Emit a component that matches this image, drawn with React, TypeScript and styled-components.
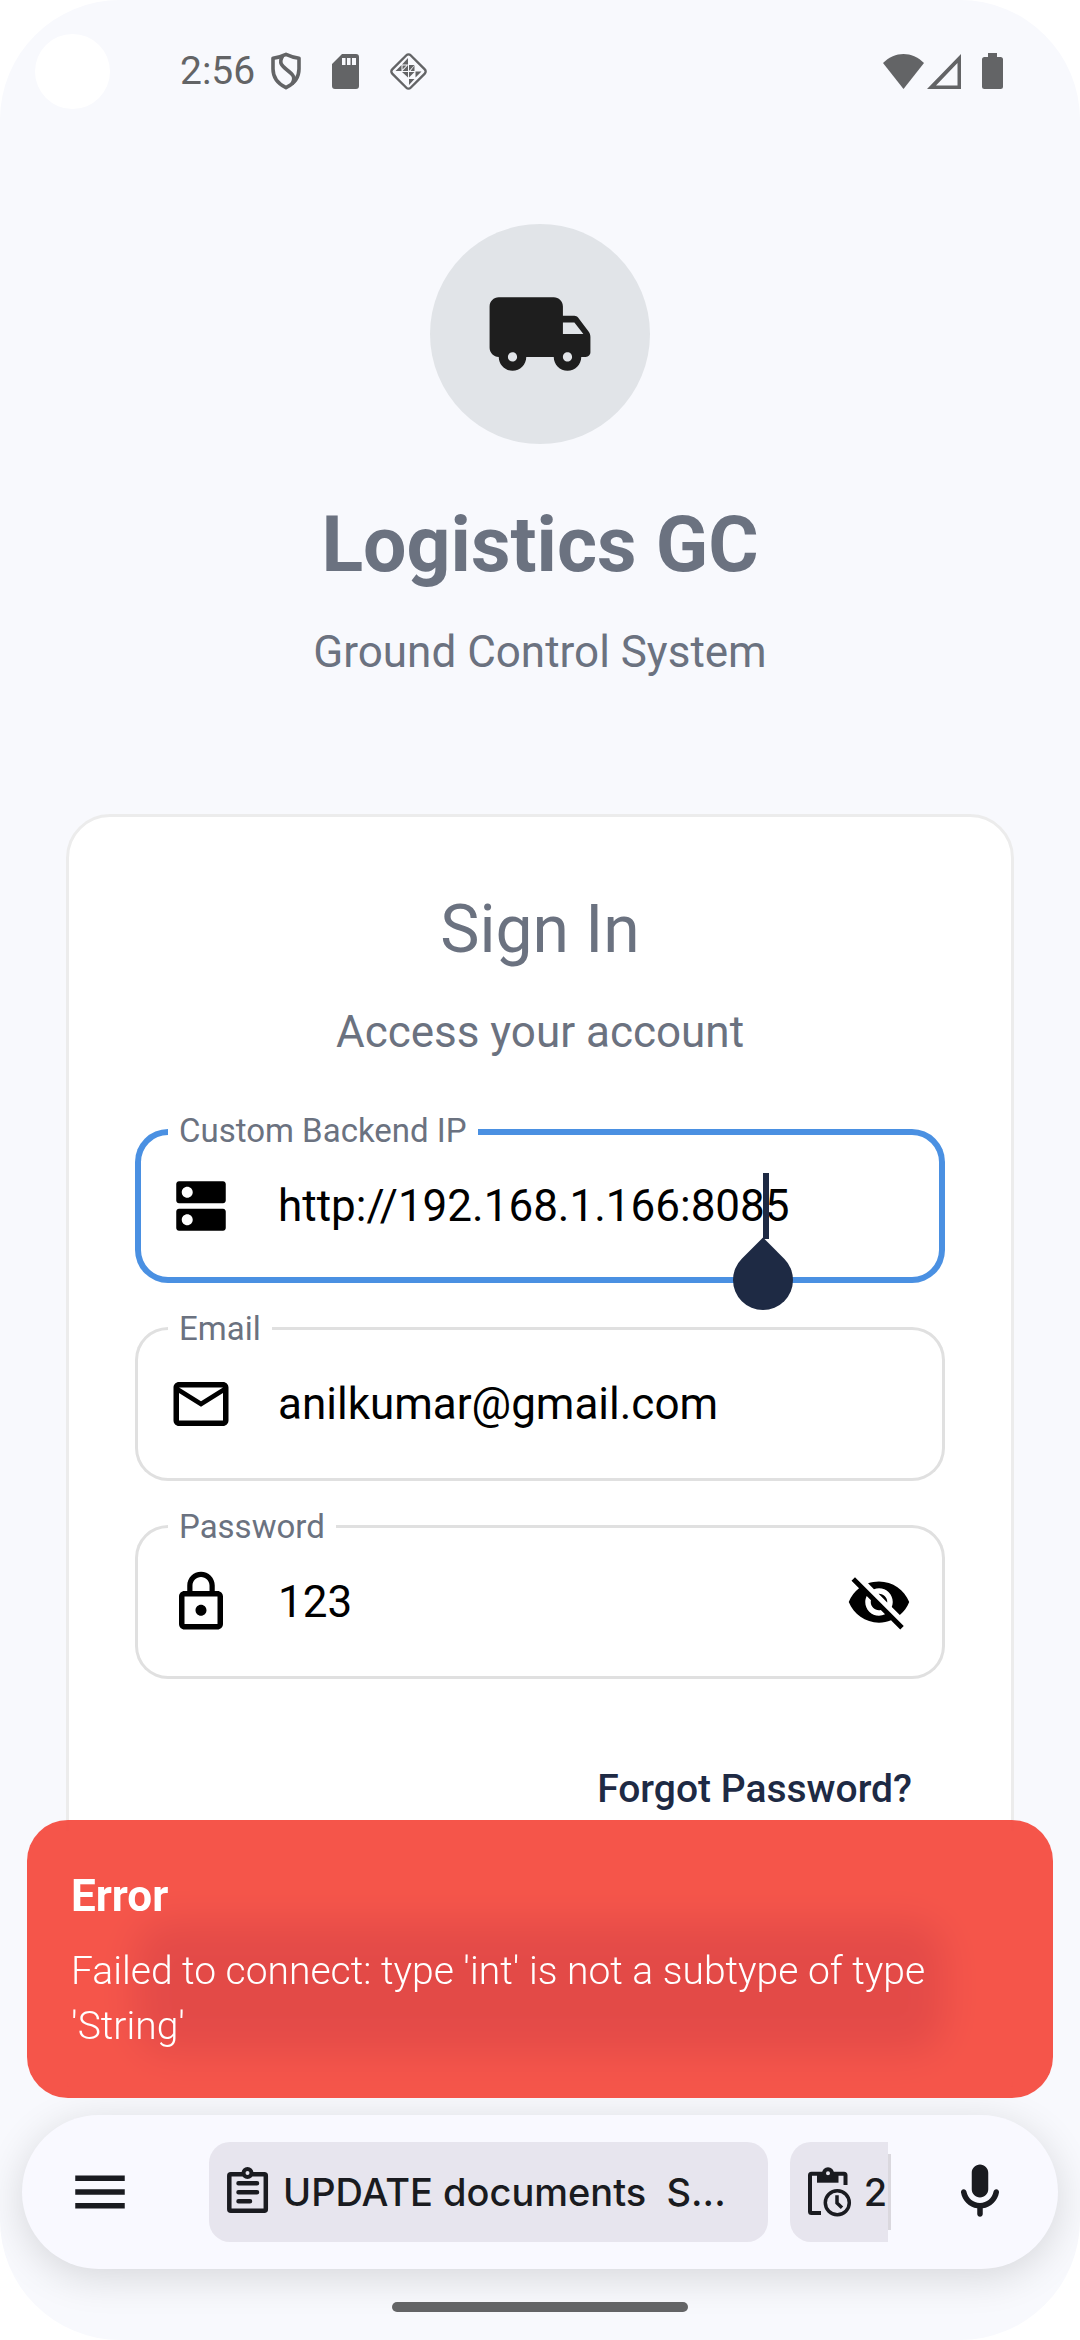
import React from 'react';
import styled, { createGlobalStyle } from 'styled-components';
import { MdDns, MdOutlineEmail, MdLockOutline, MdVisibilityOff, MdMenu } from 'react-icons/md';

const color = {
  canvas: '#f8f9fd',
  surface: '#ffffff',
  muted: '#6b7280',
  navy: '#1e2a44',
  focus: '#4a90e2',
  line: '#e0e0e0',
  status: '#636466',
  keyboard: '#f9f9ff',
  chip: '#e7e5ee',
  ink: '#1a1b20',
};

const GlobalStyle = createGlobalStyle`
  *, *::before, *::after { box-sizing: border-box; }
  body { margin: 0; background: #ffffff; }
  button, input { font: inherit; color: inherit; margin: 0; padding: 0; border: 0; background: none; }
  h1, h2, p { margin: 0; font-weight: 400; }
  svg { display: block; flex: none; }
`;

const Screen = styled.div`
  display: flex;
  flex-direction: column;
  height: 100vh;
  overflow: hidden;
  border-radius: 120px;
  background: ${color.canvas};
  color: #000000;
  font-family: Roboto, "Liberation Sans", sans-serif;
`;

const StatusBar = styled.header`
  display: flex;
  align-items: center;
  flex: none;
  height: 142px;
  padding: 0 77px 0 35px;
  color: ${color.status};
`;

const Camera = styled.span`
  width: 75px;
  height: 75px;
  border-radius: 50%;
  background: ${color.surface};
`;

const Clock = styled.time`
  margin-left: 70px;
  font-size: 39px;
  line-height: 46px;
`;

const Notifications = styled.span`
  display: flex;
  align-items: center;
  gap: 30px;
  flex: 1;
  margin-left: 15px;
`;

const Signals = styled.span`
  display: flex;
  align-items: center;
`;

const Battery = styled.span`
  margin-left: 20px;
`;

const Main = styled.main`
  position: relative;
  flex: 1;
  min-height: 0;
`;

const Scroller = styled.div`
  height: 100%;
  overflow: hidden;
  padding: 82px 66px 0;
`;

const Brand = styled.section`
  display: flex;
  flex-direction: column;
  align-items: center;
  color: ${color.muted};
`;

const BrandMark = styled.div`
  display: flex;
  align-items: center;
  justify-content: center;
  width: 220px;
  height: 220px;
  border-radius: 50%;
  background: #e1e4e8;
  color: #1e1e1e;
`;

const BrandName = styled.h1`
  margin-top: 55px;
  font-size: 77px;
  font-weight: 700;
  line-height: 92px;
`;

const Lead = styled.p`
  font-size: 44px;
  line-height: 66px;
  color: ${color.muted};
`;

const BrandLead = styled(Lead)`
  margin-top: 28px;
`;

const Card = styled.form`
  display: flex;
  flex-direction: column;
  margin-top: 129px;
  padding: 66px;
  border: 3px solid #ececec;
  border-radius: 44px;
  background: ${color.surface};
`;

const CardHead = styled.div`
  display: flex;
  flex-direction: column;
  gap: 22px;
  text-align: center;
`;

const CardTitle = styled.h2`
  font-size: 66px;
  line-height: 94px;
  color: ${color.muted};
`;

const Fields = styled.div`
  display: flex;
  flex-direction: column;
  gap: 44px;
  margin-top: 64px;
`;

const Field = styled.div<{ $focused?: boolean }>`
  position: relative;
  display: flex;
  align-items: center;
  gap: 44px;
  height: 154px;
  padding: 0 33px;
  border-radius: 33px;
  box-shadow: inset 0 0 0 ${p => (p.$focused ? `6px ${color.focus}` : `3px ${color.line}`)};
`;

const FieldLabel = styled.label`
  position: absolute;
  top: -18px;
  left: 33px;
  padding: 0 11px;
  background: ${color.surface};
  color: ${color.muted};
  font-size: 33px;
  line-height: 40px;
`;

const FieldInput = styled.input`
  flex: 1;
  min-width: 0;
  height: 66px;
  outline: none;
  font-size: 44px;
  line-height: 66px;
`;

const Caret = styled.span`
  position: absolute;
  top: 44px;
  left: 628px;
  width: 6px;
  height: 66px;
  background: ${color.navy};
`;

const CaretHandle = styled.span`
  position: absolute;
  top: 77px;
  left: -30px;
  z-index: 1;
  width: 60px;
  height: 60px;
  border-radius: 0 50% 50% 50%;
  background: ${color.navy};
  transform: rotate(45deg);
`;

const IconButton = styled.button`
  display: flex;
  align-items: center;
  justify-content: center;
  flex: none;
`;

const TextButton = styled.button`
  align-self: flex-end;
  height: 132px;
  margin-top: 44px;
  padding: 0 33px;
  color: ${color.navy};
  font-size: 39px;
  font-weight: 500;
`;

const SubmitButton = styled.button`
  height: 132px;
  margin-top: 66px;
  border-radius: 33px;
  background: ${color.focus};
`;

const Snackbar = styled.div`
  position: absolute;
  right: 27px;
  bottom: -11px;
  left: 27px;
  z-index: 2;
  padding: 44px;
  border-radius: 41px;
  background: rgba(244, 67, 54, 0.9);
  backdrop-filter: blur(19px);
  color: ${color.surface};
`;

const SnackTitle = styled.p`
  font-size: 44px;
  font-weight: 700;
  line-height: 64px;
`;

const SnackMessage = styled.p`
  margin-top: 16px;
  font-size: 39px;
  font-weight: 300;
  line-height: 55px;
`;

const KeyboardDock = styled.footer`
  display: flex;
  flex-direction: column;
  align-items: center;
  flex: none;
  padding: 28px 22px;
`;

const Toolbar = styled.div`
  display: flex;
  align-items: center;
  align-self: stretch;
  height: 154px;
  padding: 0 45px;
  border-radius: 77px;
  background: ${color.keyboard};
  box-shadow: 0 8px 40px rgba(0, 0, 0, 0.14);
  color: ${color.ink};
`;

const Clips = styled.div`
  display: flex;
  gap: 22px;
  flex: 1;
  min-width: 0;
  margin-left: 76px;
  overflow: hidden;
`;

const Clip = styled.button`
  display: flex;
  align-items: center;
  flex: none;
  gap: 12px;
  height: 100px;
  padding: 0 42px 0 14px;
  border-radius: 21px;
  background: ${color.chip};
  font-family: Inter, Roboto, sans-serif;
  font-size: 38px;
  font-weight: 500;
  white-space: pre;
`;

const Divider = styled.span`
  width: 3px;
  height: 76px;
  margin-right: 56px;
  background: #dad8de;
`;

const HomeBar = styled.span`
  width: 296px;
  height: 10px;
  margin-top: 33px;
  border-radius: 5px;
  background: ${color.status};
`;

const ShieldIcon = () => (
  <svg width="32" height="38" viewBox="0 0 32 38" fill="none" stroke="currentColor" strokeWidth="3.600">
    <path d="M16 2.300 Q23 5.500 29 6.300 V17 C29 26.500 23.500 32 16 35.700 C8.500 32 3 26.500 3 17 V6.300 Q9 5.500 16 2.300 Z" strokeLinejoin="round" />
    <path d="M12.500 4 C8.500 11 12 14 16.500 17.500 C23 22.500 26 25 22 32" />
  </svg>
);

const SdCardIcon = () => (
  <svg width="27" height="35" viewBox="0 0 27 35" fill="currentColor">
    <path fillRule="evenodd" d="M10 0H24a3 3 0 0 1 3 3V32a3 3 0 0 1-3 3H3a3 3 0 0 1-3-3V10Z M10 4v7h3.500V4Z M15 4v7h3.500V4Z M20 4v7h4V4Z" />
  </svg>
);

const DiamondIcon = () => (
  <svg width="39" height="39" viewBox="0 0 39 39" fill="currentColor">
    <rect x="6.500" y="6.500" width="26" height="26" rx="3" fill="none" stroke="currentColor" strokeWidth="2.400" transform="rotate(45 19.500 19.500)" />
    <path d="M19 6v6.500h-6Z M12.500 13v6H6.500Z M20 13h5.500l-5.500 6Z M19 13v6h-5.500Z M26.500 19.500h6l-6 6Z M13 20h6v5.500Z M20 20h5.500l-5.500 5.500Z M20 27v6l5.500-6Z M25.500 13.500v5.500h-4Z M13.500 13.500h4l-4 4Z" />
  </svg>
);

const WifiIcon = () => (
  <svg width="41" height="35" viewBox="0 0 41 35" fill="currentColor">
    <path d="M0 9 C12 -3 29 -3 41 9 L20.500 35 Z" />
  </svg>
);

const SignalIcon = () => (
  <svg width="38" height="35" viewBox="0 0 38 35" fill="currentColor">
    <path fillRule="evenodd" d="M3 35 L37 0 V35 Z M12 31.500 H33.500 V9 Z" />
  </svg>
);

const BatteryIcon = () => (
  <svg width="21" height="36" viewBox="0 0 21 36" fill="currentColor">
    <path d="M6 0h9v4h3.500a2.500 2.500 0 0 1 2.500 2.500v27a2.500 2.500 0 0 1-2.500 2.500h-16a2.500 2.500 0 0 1-2.500-2.500v-27a2.500 2.500 0 0 1 2.500-2.500h3.500Z" />
  </svg>
);

const TruckIcon = () => (
  <svg width="110" height="110" viewBox="0 0 24 24" fill="currentColor">
    <path d="M19.500 8H17V6c0-1.100-.9-2-2-2H3c-1.100 0-2 .9-2 2v9c0 1.100.9 2 2 2 0 1.660 1.340 3 3 3s3-1.340 3-3h6c0 1.660 1.340 3 3 3s3-1.340 3-3h1c.55 0 1-.45 1-1v-3.330c0-.43-.14-.85-.4-1.200L20.300 8.400c-.19-.25-.49-.4-.8-.4zM6 18c-.55 0-1-.45-1-1s.45-1 1-1 1 .45 1 1-.45 1-1 1zm13.500-8.500l1.960 2.500H17V9.500h2.500zM18 18c-.55 0-1-.45-1-1s.45-1 1-1 1 .45 1 1-.45 1-1 1z" />
  </svg>
);

const ClipboardIcon = () => (
  <svg width="48" height="50" viewBox="0 0 48 50" fill="none" stroke="currentColor" strokeWidth="4.500" strokeLinecap="round">
    <rect x="6.300" y="7.300" width="36.500" height="36.500" rx="1.500" />
    <path d="M15.500 16.300h18.500M15.500 25.300h18.500M15.500 34.300h11.500" />
    <circle cx="24.500" cy="6" r="4" fill={color.chip} strokeWidth="4" />
  </svg>
);

const ClipboardClockIcon = () => (
  <svg width="48" height="50" viewBox="0 0 48 50" fill="none" stroke="currentColor" strokeWidth="4">
    <path d="M17 46H7.500a1.500 1.500 0 0 1-1.500-1.500V8.200a1.500 1.500 0 0 1 1.500-1.500h32.500a1.500 1.500 0 0 1 1.500 1.500V18" />
    <path d="M13 6h21.500v9.700H13Z" fill="currentColor" stroke="none" />
    <circle cx="24" cy="6.200" r="4" fill={color.chip} />
    <circle cx="33.300" cy="35.700" r="12" strokeWidth="3.500" />
    <path d="M33 28.300v7.700l5 4.700" strokeWidth="3.500" />
  </svg>
);

const MicIcon = () => (
  <svg width="66" height="66" viewBox="0 0 24 24" fill="currentColor">
    <path d="M12 14c1.660 0 3-1.340 3-3V5c0-1.660-1.340-3-3-3S9 3.340 9 5v6c0 1.660 1.340 3 3 3zm5.910-3c-.49 0-.9.36-.98.85C16.520 14.200 14.470 16 12 16s-4.520-1.800-4.930-4.150c-.08-.49-.49-.85-.98-.85-.61 0-1.090.54-1 1.140.49 3 2.890 5.350 5.910 5.780V20c0 .55.45 1 1 1s1-.45 1-1v-2.080c3.020-.43 5.420-2.780 5.910-5.780.1-.6-.39-1.140-1-1.140z" />
  </svg>
);

export default function App() {
  return (
    <>
      <GlobalStyle />
      <Screen>
        <StatusBar>
          <Camera />
          <Clock>2:56</Clock>
          <Notifications>
            <ShieldIcon />
            <SdCardIcon />
            <DiamondIcon />
          </Notifications>
          <Signals>
            <WifiIcon />
            <SignalIcon />
            <Battery>
              <BatteryIcon />
            </Battery>
          </Signals>
        </StatusBar>

        <Main>
          <Scroller>
            <Brand>
              <BrandMark>
                <TruckIcon />
              </BrandMark>
              <BrandName>Logistics GC</BrandName>
              <BrandLead>Ground Control System</BrandLead>
            </Brand>

            <Card onSubmit={e => e.preventDefault()}>
              <CardHead>
                <CardTitle>Sign In</CardTitle>
                <Lead>Access your account</Lead>
              </CardHead>
              <Fields>
                <Field $focused>
                  <FieldLabel htmlFor="backend">Custom Backend IP</FieldLabel>
                  <MdDns size={66} />
                  <FieldInput id="backend" type="text" defaultValue="http://192.168.1.166:8085" />
                  <Caret>
                    <CaretHandle />
                  </Caret>
                </Field>
                <Field>
                  <FieldLabel htmlFor="email">Email</FieldLabel>
                  <MdOutlineEmail size={66} />
                  <FieldInput id="email" type="email" defaultValue="anilkumar@gmail.com" />
                </Field>
                <Field>
                  <FieldLabel htmlFor="password">Password</FieldLabel>
                  <MdLockOutline size={66} />
                  <FieldInput id="password" type="text" defaultValue="123" />
                  <IconButton type="button" aria-label="Hide password">
                    <MdVisibilityOff size={66} />
                  </IconButton>
                </Field>
              </Fields>
              <TextButton type="button">Forgot Password?</TextButton>
              <SubmitButton type="submit" aria-label="Sign In" />
            </Card>
          </Scroller>

          <Snackbar role="alert">
            <SnackTitle>Error</SnackTitle>
            <SnackMessage>Failed to connect: type 'int' is not a subtype of type 'String'</SnackMessage>
          </Snackbar>
        </Main>

        <KeyboardDock>
          <Toolbar>
            <IconButton type="button" aria-label="Menu">
              <MdMenu size={66} />
            </IconButton>
            <Clips>
              <Clip type="button">
                <ClipboardIcon />
                {'UPDATE documents  S...'}
              </Clip>
              <Clip type="button">
                <ClipboardClockIcon />2
              </Clip>
            </Clips>
            <Divider />
            <IconButton type="button" aria-label="Voice input">
              <MicIcon />
            </IconButton>
          </Toolbar>
          <HomeBar />
        </KeyboardDock>
      </Screen>
    </>
  );
}
